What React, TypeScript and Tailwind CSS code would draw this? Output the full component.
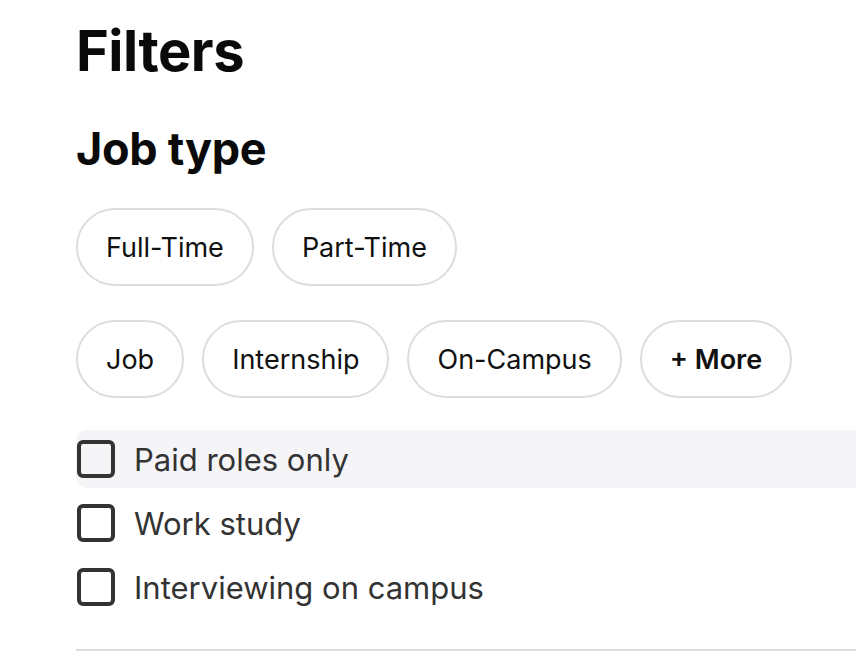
import React from "react";

const pillsRow1 = ["Full-Time", "Part-Time"];
const pillsRow2 = ["Job", "Internship", "On-Campus"];
const checks = ["Paid roles only", "Work study", "Interviewing on campus"];

function Pill({ label, bold }: { label: string; bold?: boolean }) {
  return (
    <button
      className={
        "h-[78px] rounded-full border-2 border-[#dddddd] bg-white px-[28px] text-[27px] text-[#111111] leading-none " +
        (bold ? "font-semibold" : "font-normal")
      }
    >
      {label}
    </button>
  );
}

export default function App() {
  return (
    <div
      className="min-h-[667px] w-full overflow-hidden bg-white pl-[76px]"
      style={{ fontFamily: "Inter, 'Liberation Sans', sans-serif" }}
    >
      <h1 className="pt-[19px] text-[56px] font-bold leading-[64px] tracking-[-0.5px] text-[#0a0a0a]">
        Filters
      </h1>
      <h2 className="mt-[40px] text-[45px] font-bold leading-[52px] tracking-[-0.3px] text-[#0a0a0a]">
        Job type
      </h2>
      <div className="mt-[33px] flex gap-[18px]">
        {pillsRow1.map((p) => (
          <Pill key={p} label={p} />
        ))}
      </div>
      <div className="mt-[34px] flex gap-[18px]">
        {pillsRow2.map((p) => (
          <Pill key={p} label={p} />
        ))}
        <Pill label="+ More" bold />
      </div>
      <div className="mt-[32px] flex flex-col gap-[6px]">
        {checks.map((c, i) => (
          <label
            key={c}
            className={
              "flex h-[58px] items-center rounded-l-[10px] pl-[1px] " +
              (i === 0 ? "bg-[#f5f5f7]" : "")
            }
          >
            <span className="box-border h-[38px] w-[38px] shrink-0 rounded-[6px] border-[4px] border-[#333333]" />
            <span className="ml-[19px] text-[31px] leading-none text-[#333333]">{c}</span>
          </label>
        ))}
      </div>
      <div className="mt-[33px] h-[2px] w-full bg-[#dddddd]" />
    </div>
  );
}
